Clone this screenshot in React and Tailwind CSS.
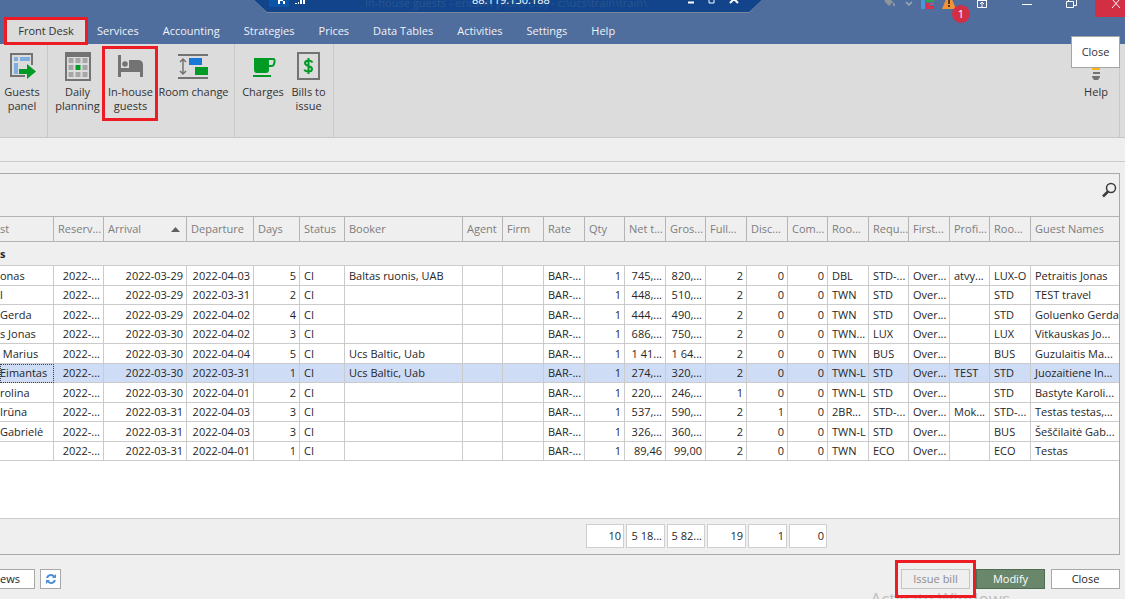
import { Fragment } from 'react';

const menuTabs = ['Services', 'Accounting', 'Strategies', 'Prices', 'Data Tables', 'Activities', 'Settings', 'Help'];

const columns = [
  { label: 'st', width: 54 },
  { label: 'Reserv...', width: 50, right: true },
  { label: 'Arrival', width: 83, right: true, sorted: true },
  { label: 'Departure', width: 67, right: true },
  { label: 'Days', width: 46, right: true },
  { label: 'Status', width: 45 },
  { label: 'Booker', width: 118 },
  { label: 'Agent', width: 40 },
  { label: 'Firm', width: 41 },
  { label: 'Rate', width: 41 },
  { label: 'Qty', width: 40, right: true },
  { label: 'Net t...', width: 41, right: true },
  { label: 'Gros...', width: 40, right: true },
  { label: 'Full...', width: 41, right: true },
  { label: 'Disc...', width: 41, right: true },
  { label: 'Com...', width: 40, right: true },
  { label: 'Roo...', width: 41 },
  { label: 'Requ...', width: 40 },
  { label: 'First...', width: 41 },
  { label: 'Profi...', width: 40 },
  { label: 'Roo...', width: 41 },
  { label: 'Guest Names' },
];

const rows = [
  ['onas', '2022-...', '2022-03-29', '2022-04-03', '5', 'CI', 'Baltas ruonis, UAB', '', '', 'BAR-...', '1', '745,...', '820,...', '2', '0', '0', 'DBL', 'STD-...', 'Over...', 'atvy...', 'LUX-O', 'Petraitis Jonas'],
  ['l', '2022-...', '2022-03-29', '2022-03-31', '2', 'CI', '', '', '', 'BAR-...', '1', '448,...', '510,...', '2', '0', '0', 'TWN', 'STD', 'Over...', '', 'STD', 'TEST travel'],
  ['Gerda', '2022-...', '2022-03-29', '2022-04-02', '4', 'CI', '', '', '', 'BAR-...', '1', '444,...', '490,...', '2', '0', '0', 'TWN', 'STD', 'Over...', '', 'STD', 'Goluenko Gerda'],
  ['s Jonas', '2022-...', '2022-03-30', '2022-04-02', '3', 'CI', '', '', '', 'BAR-...', '1', '686,...', '750,...', '2', '0', '0', 'TWN...', 'LUX', 'Over...', '', 'LUX', 'Vitkauskas Jo...'],
  [' Marius', '2022-...', '2022-03-30', '2022-04-04', '5', 'CI', 'Ucs Baltic, Uab', '', '', 'BAR-...', '1', '1 41...', '1 64...', '2', '0', '0', 'TWN', 'BUS', 'Over...', '', 'BUS', 'Guzulaitis Ma...'],
  ['Eimantas', '2022-...', '2022-03-30', '2022-03-31', '1', 'CI', 'Ucs Baltic, Uab', '', '', 'BAR-...', '1', '274,...', '320,...', '2', '0', '0', 'TWN-L', 'STD', 'Over...', 'TEST', 'STD', 'Juozaitiene In...'],
  ['rolina', '2022-...', '2022-03-30', '2022-04-01', '2', 'CI', '', '', '', 'BAR-...', '1', '220,...', '246,...', '1', '0', '0', 'TWN-L', 'STD', 'Over...', '', 'STD', 'Bastyte Karoli...'],
  ['Irūna', '2022-...', '2022-03-31', '2022-04-03', '3', 'CI', '', '', '', 'BAR-...', '1', '537,...', '590,...', '2', '1', '0', '2BR...', 'STD-...', 'Over...', 'Mok...', 'STD-...', 'Testas testas,...'],
  ['Gabrielė', '2022-...', '2022-03-31', '2022-04-03', '3', 'CI', '', '', '', 'BAR-...', '1', '326,...', '360,...', '2', '0', '0', 'TWN-L', 'STD', 'Over...', '', 'BUS', 'Šeščilaitė Gab...'],
  ['', '2022-...', '2022-03-31', '2022-04-01', '1', 'CI', '', '', '', 'BAR-...', '1', '89,46', '99,00', '2', '0', '0', 'TWN', 'ECO', 'Over...', '', 'ECO', 'Testas'],
];

const selectedRow = 5;

// column index -> total
const totals = { 10: '10', 11: '5 18...', 12: '5 82...', 13: '19', 14: '1', 15: '0' };

function GuestsPanelIcon() {
  return (
    <svg width="28" height="28" viewBox="0 0 28 28" fill="none">
      <path d="M24 13V2H3v22h14" stroke="#737373" strokeWidth="2" />
      <path d="M6 5h4v4H6zM12 5h10v4H12zM6 11h4v11H6z" fill="#7db0e0" />
      <path d="M11 17h8v-5l9 7.500-9 7.500v-5h-8z" fill="#009b25" />
    </svg>
  );
}

function PlanningIcon() {
  const cells = [6, 13, 20];
  return (
    <svg width="28" height="30" viewBox="0 0 28 30" fill="none">
      <rect x="2" y="2" width="24" height="27" stroke="#737373" strokeWidth="2" />
      <path d="M1 1h26v5H1z" fill="#737373" />
      {cells.map((y) => (
        <Fragment key={y}>
          {cells.map((x) => (
            <rect key={x} x={x - 1.5} y={y + 1} width="5" height="5" fill={x === 13 && y === 13 ? '#009b25' : '#a6a6a6'} />
          ))}
        </Fragment>
      ))}
    </svg>
  );
}

function BedIcon() {
  return (
    <svg width="28" height="28" viewBox="0 0 28 28" fill="#737373">
      <path d="M1 3h3v13h8V8h9q5 0 5 5v12h-3v-5H4v5H1z" />
      <circle cx="8" cy="12" r="2.800" />
    </svg>
  );
}

function RoomChangeIcon() {
  return (
    <svg width="32" height="28" viewBox="0 0 32 28" fill="none">
      <path d="M0 3h30M0 26h30" stroke="#737373" strokeWidth="2" />
      <path d="M5 8v13M2 10l3-3 3 3M2 19l3 3 3-3" stroke="#737373" strokeWidth="1.500" />
      <path d="M11 6h13v7H11z" fill="#1778d8" />
      <path d="M17 15h13v8H17z" fill="#009b25" />
    </svg>
  );
}

function ChargesIcon() {
  return (
    <svg width="28" height="28" viewBox="0 0 28 28" fill="none">
      <path d="M5 6h15v12q0 3-3 3H8q-3 0-3-3zM4 23h18v2H4z" fill="#009b25" />
      <path d="M19 7h5q2 0 1.500 3l-.5 2q-.5 2-2.500 2H19" stroke="#009b25" strokeWidth="2" />
    </svg>
  );
}

function BillsIcon() {
  return (
    <svg width="24" height="28" viewBox="0 0 24 28" fill="none">
      <path d="M1 1h21v26H1z" stroke="#737373" strokeWidth="2" />
      <path d="M15.500 10.500q-1-2-4-2t-3.500 2.500q0 2 3.500 3t3.500 3q0 2.500-3.500 2.500t-4-2M11.500 6v16" stroke="#009b25" strokeWidth="2" />
    </svg>
  );
}

function HelpIcon() {
  return (
    <svg width="28" height="28" viewBox="0 0 28 28">
      <circle cx="14" cy="9" r="7" fill="#fdb515" />
      <path d="M10 13h8v5h-8z" fill="#fdb515" />
      <path d="M11 20h7v2h-7zM10 24h8v1l-2 3h-4l-2-3z" fill="#737373" />
    </svg>
  );
}

function RibbonButton({ icon, className, children }) {
  return (
    <button className={`flex shrink-0 flex-col items-center pt-[7px] leading-[14px] ${className}`}>
      <span className="mb-1 flex h-[30px] items-center">{icon}</span>
      <span className="whitespace-pre text-center">{children}</span>
    </button>
  );
}

// floating bar of the remote session, hangs over the title bar
function ConnectionBar() {
  return (
    <div className="absolute top-0 left-[254px] h-[13px] w-[508px] bg-[#7c8797] [clip-path:polygon(0_0,100%_0,calc(100%_-_13px)_100%,13px_100%)]">
      <div className="relative h-3 overflow-hidden bg-[#11448a] [clip-path:polygon(0_0,100%_0,calc(100%_-_13px)_100%,13px_100%)]">
        <svg className="absolute top-0 left-[14px]" width="40" height="8" viewBox="0 0 40 8">
          <path d="M1 0h20v7H1z" fill="#0b55a8" />
          <path d="M10 0h2v4h-2zM17 0h-2v4h2zM10 0h7v1h-7z" fill="#fff" />
          <path d="M27 3h2v1h-2zM30 2h1v2h-1zM32 0h2v4h-2zM35 0h2v4h-2z" fill="#fff" />
        </svg>
        <span className="absolute -top-1 left-[111px] text-[11px] leading-[14px] whitespace-nowrap text-[#2a5590]">
          In-house guests - ericsoft [hotel 3.5] - c:\ucs\train\train\
        </span>
        <span className="absolute -top-[7px] left-[218px] text-[11px] leading-[14px] text-white">88.119.130.188</span>
        <svg className="absolute top-0 left-[433px]" width="54" height="8" viewBox="0 0 54 8" stroke="#fff" fill="none">
          <path d="M1 2.500h6" strokeWidth="2" />
          <path d="M22 0v3h5V0" />
          <path d="M43 3l4-4 4 4" strokeWidth="2" />
        </svg>
      </div>
    </div>
  );
}

function TitleBar() {
  return (
    <div className="relative flex h-[18px] justify-end">
      <ConnectionBar />
      <div className="flex items-start">
        <svg width="60" height="14" viewBox="0 0 60 14" aria-hidden="true">
          <path d="M1 1l5-3 4 4-4 4zM10 2q3 2 2 4h-2z" fill="#8f959c" />
          <path d="M23 2l3 3 3-3" stroke="#a4a9b0" fill="none" strokeWidth="1.500" />
          <path d="M38 0h4v9h-4z" fill="#4a94dc" />
          <path d="M43 0h8v2h-8z" fill="#2da44e" />
          <path d="M43 3h3v6h-3zM47 6h4v3h-4z" fill="#d92f4b" />
          <path d="M47 3h4v2h-4z" fill="#a25a8c" />
        </svg>
        <div className="relative -ml-px">
          <svg width="14" height="10" viewBox="0 0 14 10">
            <path d="M5-3h4l5 12H0z" fill="#f39237" />
            <path d="M6 0h2v4H6zM6 5h2v2H6z" fill="#4e3a24" />
          </svg>
          <span className="absolute top-[5px] left-[10px] flex size-[18px] items-center justify-center rounded-full bg-[#d22f45] text-[11px] text-white">1</span>
        </div>
        <button aria-label="Ribbon options" className="ml-5">
          <svg width="12" height="9" viewBox="0 0 12 9" fill="none" stroke="#fff">
            <path d="M1.500 0v7.500h9V0M1 .5h10M6 7V2M4 4l2-2 2 2" />
          </svg>
        </button>
        <button aria-label="Minimize" className="ml-[34px]">
          <svg width="10" height="9" viewBox="0 0 10 9" stroke="#fff"><path d="M0 4.500h10" /></svg>
        </button>
        <button aria-label="Restore" className="ml-[34px]">
          <svg width="11" height="9" viewBox="0 0 11 9" fill="none" stroke="#fff">
            <path d="M.5 1.500h7v6h-7zM2.500 1V-1M10.500-1v6.500H8" />
          </svg>
        </button>
        <button aria-label="Close window" className="ml-[18px] flex h-[17px] w-[30px] bg-[#d22f45]">
          <svg className="ml-4" width="10" height="9" viewBox="0 0 10 9" stroke="#fff"><path d="M1-1l8 9M9-1L1 8" /></svg>
        </button>
      </div>
    </div>
  );
}

function Ribbon() {
  return (
    <div className="relative flex h-[94px] border-b border-[#c6c6c6] bg-[#dcdcdc] text-[#333]">
      <div className="flex w-12 border-r border-[#c8c8c8]">
        <RibbonButton className="w-11" icon={<GuestsPanelIcon />}>{'Guests\npanel'}</RibbonButton>
      </div>
      <div className="flex w-[187px] border-r border-[#c8c8c8] pl-[3px]">
        <RibbonButton className="w-[53px]" icon={<PlanningIcon />}>{'Daily\nplanning'}</RibbonButton>
        <div className="relative flex">
          <RibbonButton className="w-[53px]" icon={<BedIcon />}>{'In-house\nguests'}</RibbonButton>
          <span className="pointer-events-none absolute top-[2px] -left-[2px] h-[75px] w-14 border-[3px] border-[#ed1c24]" />
        </div>
        <RibbonButton className="w-[73px]" icon={<RoomChangeIcon />}>Room change</RibbonButton>
      </div>
      <div className="flex w-[99px] border-r border-[#c8c8c8] pl-[3px]">
        <RibbonButton className="w-[50px]" icon={<ChargesIcon />}>Charges</RibbonButton>
        <RibbonButton className="w-[41px]" icon={<BillsIcon />}>{'Bills to\nissue'}</RibbonButton>
      </div>
      <div className="mr-[5px] ml-auto flex border-r border-[#c8c8c8]">
        <RibbonButton className="w-[46px]" icon={<HelpIcon />}>Help</RibbonButton>
      </div>
      <div role="tooltip" className="absolute -top-2 right-[5px] flex h-8 w-[49px] items-center justify-center border border-[#a5a5a5] bg-white">
        Close
      </div>
    </div>
  );
}

function Columns() {
  return (
    <colgroup>
      {columns.map((col, i) => (
        <col key={i} style={col.width ? { width: col.width } : undefined} />
      ))}
    </colgroup>
  );
}

function GuestTable() {
  return (
    <table className="w-full table-fixed border-separate border-spacing-0 bg-white">
      <Columns />
      <thead>
        <tr className="h-[26px] bg-[#efefef] text-[#7d7d7d]">
          {columns.map((col, i) => (
            <th
              key={i}
              className={`overflow-hidden border-y border-r border-[#b4b4b4] p-0 text-left font-normal whitespace-nowrap last:border-r-0 ${i === 0 ? '' : 'pl-1'}`}
            >
              {col.sorted ? (
                <span className="flex items-center justify-between pr-[6px]">
                  {col.label}
                  <svg width="9" height="5" viewBox="0 0 9 5" fill="#606060"><path d="M0 5l4.500-5L9 5z" /></svg>
                </span>
              ) : (
                col.label
              )}
            </th>
          ))}
        </tr>
      </thead>
      <tbody>
        <tr className="h-6 bg-[#efefef]">
          <th colSpan={columns.length} className="border-b border-[#cbcbcb] p-0 text-left font-bold">s</th>
        </tr>
        {rows.map((row, r) => (
          <tr key={r} className={`odd:h-[19px] even:h-5 ${r === selectedRow ? 'bg-[#cedcf5]' : ''}`}>
            {row.map((cell, c) => (
              <td
                key={c}
                className={`overflow-hidden border-r border-b border-[#cbcbcb] p-0 whitespace-pre last:border-r-0 ${columns[c].right ? 'pr-[3px] text-right' : ''} ${c > 0 && !columns[c].right ? 'pl-1' : ''} ${r === selectedRow && c === 0 ? 'outline-1 -outline-offset-1 outline-dotted outline-[#444]' : ''}`}
              >
                {cell}
              </td>
            ))}
          </tr>
        ))}
      </tbody>
    </table>
  );
}

function Totals() {
  return (
    <table className="w-full table-fixed border-separate border-spacing-0 border-t border-[#cbcbcb]" aria-label="Totals">
      <Columns />
      <tbody>
        <tr className="h-[35px]">
          {columns.map((col, i) => (
            <td key={i} className="p-0 px-px pt-[5px] align-top">
              {totals[i] && (
                <div className="flex h-6 items-center justify-end overflow-hidden border border-[#cfcfcf] bg-white pr-[2px] whitespace-nowrap">
                  {totals[i]}
                </div>
              )}
            </td>
          ))}
        </tr>
      </tbody>
    </table>
  );
}

function BottomBar() {
  return (
    <div className="relative flex h-11 items-start justify-between overflow-hidden pt-[14px] pr-[5px]">
      <div className="flex gap-[5px]">
        <button className="h-5 w-[35px] border border-l-0 border-[#a8a8a8] bg-white text-left">ews</button>
        <button aria-label="Refresh" className="flex h-5 w-[21px] items-center justify-center border border-[#a8a8a8] bg-white">
          <svg width="12" height="12" viewBox="0 0 12 12" fill="none" stroke="#4c8ed8" strokeWidth="2">
            <path d="M2 5q1-3 4-3 2 0 3.500 2M10 7q-1 3-4 3-2 0-3.500-2" />
            <path d="M11 1v4H7zM1 11V7h4z" fill="#4c8ed8" stroke="none" />
          </svg>
        </button>
      </div>
      <span className="pointer-events-none absolute top-8 right-[115px] text-[17px] leading-6 text-[#bdbdbd]">Activate Windows</span>
      <div className="flex gap-[6px]">
        <div className="relative flex">
          <button disabled className="h-5 w-[69px] border border-[#c6c6c6] text-[#8c8c8c]">Issue bill</button>
          <span className="pointer-events-none absolute -top-[9px] -left-[6px] h-[38px] w-[81px] border-[3px] border-[#ed1c24]" />
        </div>
        <button className="h-5 w-[69px] border border-[#4d6c50] bg-[#6a876c] text-white">Modify</button>
        <button className="h-5 w-[69px] border border-[#a8a8a8] bg-white">Close</button>
      </div>
    </div>
  );
}

export default function App() {
  return (
    <div className="flex min-h-screen flex-col overflow-hidden bg-[#efefef] font-['Open_Sans','Noto_Sans',sans-serif] text-[11px] leading-[14px] text-[#262626]">
      <header className="bg-[#4f6d9d]">
        <TitleBar />
        <nav className="flex h-[26px] pl-[7px] text-[#f0f3f8]">
          <div className="relative flex">
            <button className="w-[78px] bg-[#dcdcdc] text-[#333]">Front Desk</button>
            <span className="pointer-events-none absolute -top-px -left-[3px] z-10 h-7 w-[84px] border-[3px] border-[#ed1c24]" />
          </div>
          {menuTabs.map((tab) => (
            <button key={tab} className="px-3 whitespace-nowrap">{tab}</button>
          ))}
        </nav>
      </header>
      <Ribbon />
      <div className="h-6 border-b border-[#cbcbcb]" />
      <main className="mt-[11px] mr-[5px] flex flex-1 flex-col border-y border-r border-[#aaa]">
        <div className="flex h-[42px] items-start justify-end pt-2 pr-[2px]">
          <button aria-label="Search">
            <svg width="15" height="16" viewBox="0 0 15 16" fill="none" stroke="#3c3c3c">
              <circle cx="9" cy="6" r="4.500" strokeWidth="1.500" />
              <path d="M6 9.500L1 14.500" strokeWidth="2.500" />
            </svg>
          </button>
        </div>
        <GuestTable />
        <div className="flex-1 bg-white" />
        <Totals />
      </main>
      <BottomBar />
    </div>
  );
}
